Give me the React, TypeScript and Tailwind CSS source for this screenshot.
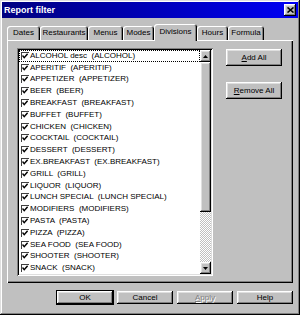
import React from 'react';

const raised =
  'shadow-[inset_-1px_-1px_#000,inset_1px_1px_#fff,inset_-2px_-2px_#808080,inset_2px_2px_#dfdfdf]';
const sunken =
  'shadow-[inset_1px_1px_#808080,inset_-1px_-1px_#fff,inset_2px_2px_#000,inset_-2px_-2px_#dfdfdf]';

const tabs = [
  { label: 'Dates', w: 'w-[33px]' },
  { label: 'Restaurants', w: 'w-[48px]' },
  { label: 'Menus', w: 'w-[35px]' },
  { label: 'Modes', w: 'w-[31px]' },
  { label: 'Divisions', w: 'w-[43px]', active: true },
  { label: 'Hours', w: 'w-[31px]' },
  { label: 'Formula', w: 'w-[36px]' },
];

const divisions = [
  'ALCOHOL desc  (ALCOHOL)',
  'APERITIF  (APERITIF)',
  'APPETIZER  (APPETIZER)',
  'BEER  (BEER)',
  'BREAKFAST  (BREAKFAST)',
  'BUFFET  (BUFFET)',
  'CHICKEN  (CHICKEN)',
  'COCKTAIL  (COCKTAIL)',
  'DESSERT  (DESSERT)',
  'EX.BREAKFAST  (EX.BREAKFAST)',
  'GRILL  (GRILL)',
  'LIQUOR  (LIQUOR)',
  'LUNCH SPECIAL  (LUNCH SPECIAL)',
  'MODIFIERS  (MODIFIERS)',
  'PASTA  (PASTA)',
  'PIZZA  (PIZZA)',
  'SEA FOOD  (SEA FOOD)',
  'SHOOTER  (SHOOTER)',
  'SNACK  (SNACK)',
];

const Check = () => (
  <span className="w-[8px] h-[8px] shrink-0 bg-white shadow-[inset_1px_1px_#404040] flex items-center justify-center">
    <svg width="6" height="6" viewBox="0 0 6 6">
      <path d="M0.5 2.5 L2.2 4.6 L5.6 0.8" stroke="#000" strokeWidth="1.4" fill="none" />
    </svg>
  </span>
);

const Arrow = ({ down }: { down?: boolean }) => (
  <div className={`h-[12px] w-full shrink-0 bg-[#c0c0c0] flex items-center justify-center ${raised}`}>
    <svg width="5" height="3" viewBox="0 0 5 3">
      <path d={down ? 'M0 0 H5 L2.5 3 Z' : 'M0 3 H5 L2.5 0 Z'} fill="#000" />
    </svg>
  </div>
);

const Btn = ({ children, className = '' }: { children: React.ReactNode; className?: string }) => (
  <div className={`bg-[#c0c0c0] flex items-center justify-center text-[8px] text-black ${raised} ${className}`}>
    {children}
  </div>
);

export default function App() {
  return (
    <div className="w-[300px] h-[315px] bg-[#c0c0c0] p-[2px] flex flex-col font-['Liberation_Sans',Arial,sans-serif] shadow-[inset_-1px_-1px_#000,inset_1px_1px_#dfdfdf,inset_-2px_-2px_#808080,inset_2px_2px_#fff]">
      {/* title bar */}
      <div className="h-[16px] flex items-center justify-between px-[2px] bg-linear-to-r from-[#000080] to-[#0000f4]">
        <span className="text-white font-bold text-[9px] leading-none">Report filter</span>
        <div className={`w-[12px] h-[12px] bg-[#c0c0c0] flex items-center justify-center ${raised}`}>
          <svg width="7" height="6" viewBox="0 0 7 6">
            <path d="M0.5 0.5 L6.5 5.5 M6.5 0.5 L0.5 5.5" stroke="#000" strokeWidth="1.6" />
          </svg>
        </div>
      </div>

      <div className="flex flex-col px-[5px] pt-[6px]">
        {/* tabs */}
        <div className="h-[16px] flex items-end relative z-10">
          {tabs.map((t) =>
            t.active ? (
              <div
                key={t.label}
                className={`${t.w} h-[17px] -mb-[1px] bg-[#c0c0c0] rounded-t-[3px] flex items-center justify-center pb-[1px] text-[8px] text-black shadow-[inset_1px_1px_#fff,inset_-1px_0_#000,inset_-2px_0_#808080]`}
              >
                {t.label}
              </div>
            ) : (
              <div
                key={t.label}
                className={`${t.w} h-[14px] bg-[#c0c0c0] rounded-t-[3px] flex items-center justify-center text-[8px] text-black shadow-[inset_1px_1px_#fff,inset_-1px_0_#000,inset_-2px_0_#808080]`}
              >
                {t.label}
              </div>
            )
          )}
        </div>

        {/* panel */}
        <div className="h-[243px] flex items-start pl-[10px] pt-[8px] shadow-[inset_1px_1px_#fff,inset_-1px_-1px_#000,inset_-2px_-2px_#808080]">
          <div className={`w-[196px] h-[228px] bg-white p-[2px] flex ${sunken}`}>
            <div className="flex-1 overflow-hidden flex flex-col">
              {divisions.map((d, i) => (
                <div
                  key={d}
                  className={`h-[11.8px] shrink-0 flex items-center gap-[1px] pl-[1px] border ${
                    i === 0 ? 'border-dotted border-black' : 'border-transparent'
                  }`}
                >
                  <Check />
                  <span className="text-[8px] leading-none text-black whitespace-pre">{d}</span>
                </div>
              ))}
            </div>
            <div className="w-[11px] flex flex-col">
              <Arrow />
              <div className={`h-[150px] shrink-0 bg-[#c0c0c0] ${raised}`} />
              <div className="flex-1 bg-[repeating-conic-gradient(#c0c0c0_0%_25%,#ffffff_0%_50%)] bg-[length:2px_2px]" />
              <Arrow down />
            </div>
          </div>

          <div className="ml-[13px] mt-[1px] flex flex-col gap-[16px]">
            <Btn className="w-[56px] h-[17px]">
              <span>
                <u>A</u>dd All
              </span>
            </Btn>
            <Btn className="w-[56px] h-[17px]">
              <span>
                <u>R</u>emove All
              </span>
            </Btn>
          </div>
        </div>

        {/* footer buttons */}
        <div className="mt-[8px] flex justify-end gap-[4px]">
          <Btn className="w-[56px] h-[13px] outline outline-1 outline-black">OK</Btn>
          <Btn className="w-[56px] h-[13px]">Cancel</Btn>
          <Btn className="w-[56px] h-[13px]">
            <span className="text-[#808080] [text-shadow:1px_1px_#fff]">
              <u>A</u>pply
            </span>
          </Btn>
          <Btn className="w-[56px] h-[13px]">Help</Btn>
        </div>
      </div>
    </div>
  );
}
